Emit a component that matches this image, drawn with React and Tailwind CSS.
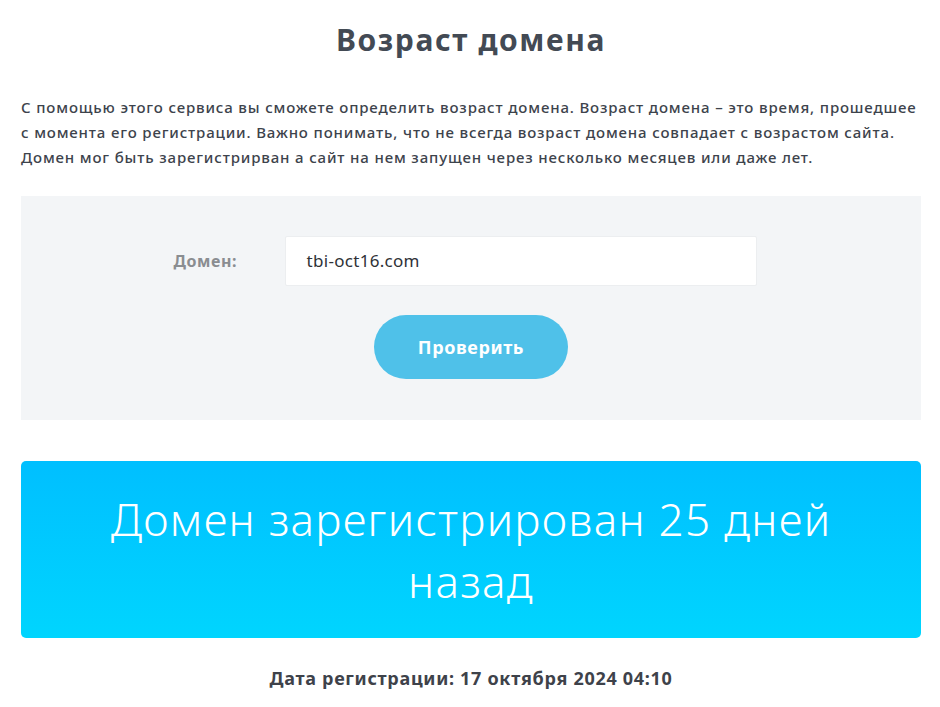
export default function App() {
  return (
    <div className="w-[940px] h-[707px] bg-white overflow-hidden font-['Noto_Sans',sans-serif]">
      <div className="ml-[21px] w-[900px]">
        <h1 className="pt-[20px] text-center text-[30px] leading-[40px] font-bold text-[#434a54] tracking-[1.6px]">
          Возраст домена
        </h1>
        <p className="mt-[35px] text-[15px] leading-[25px] text-[#3d434c] font-medium tracking-[0.85px] whitespace-nowrap">
          С помощью этого сервиса вы сможете определить возраст домена. Возраст домена – это время, прошедшее
          <br />
          с момента его регистрации. Важно понимать, что не всегда возраст домена совпадает с возрастом сайта.
          <br />
          Домен мог быть зарегистрирван а сайт на нем запущен через несколько месяцев или даже лет.
        </p>
        <div className="mt-[26px] h-[224px] bg-[#f3f5f7] flex flex-col items-center pt-[40px]">
          <div className="flex items-center pr-[12px]">
            <label className="w-[111px] text-[16px] font-bold text-[#8a8d91] tracking-[0.6px]">Домен:</label>
            <div className="w-[472px] h-[50px] bg-white rounded-[2px] border border-[#eceef0] flex items-center pl-[21px] text-[17px] text-[#2f3237] tracking-[0.3px]">
              tbi-oct16.com
            </div>
          </div>
          <button className="mt-[29px] w-[194px] h-[64px] rounded-full bg-[#4fc1e9] text-white text-[18px] font-bold tracking-[0.6px]">
            Проверить
          </button>
        </div>
        <div className="mt-[41px] h-[177px] rounded-[5px] bg-gradient-to-b from-[#00bfff] to-[#00d5fe] flex items-center justify-center text-center px-[60px]">
          <div className="text-white text-[44px] leading-[62px] font-light tracking-[1.3px]">
            Домен зарегистрирован 25 дней назад
          </div>
        </div>
        <div className="mt-[27px] text-center text-[18px] font-bold text-[#3e424a] tracking-[0.7px]">
          Дата регистрации: 17 октября 2024 04:10
        </div>
      </div>
    </div>
  );
}
